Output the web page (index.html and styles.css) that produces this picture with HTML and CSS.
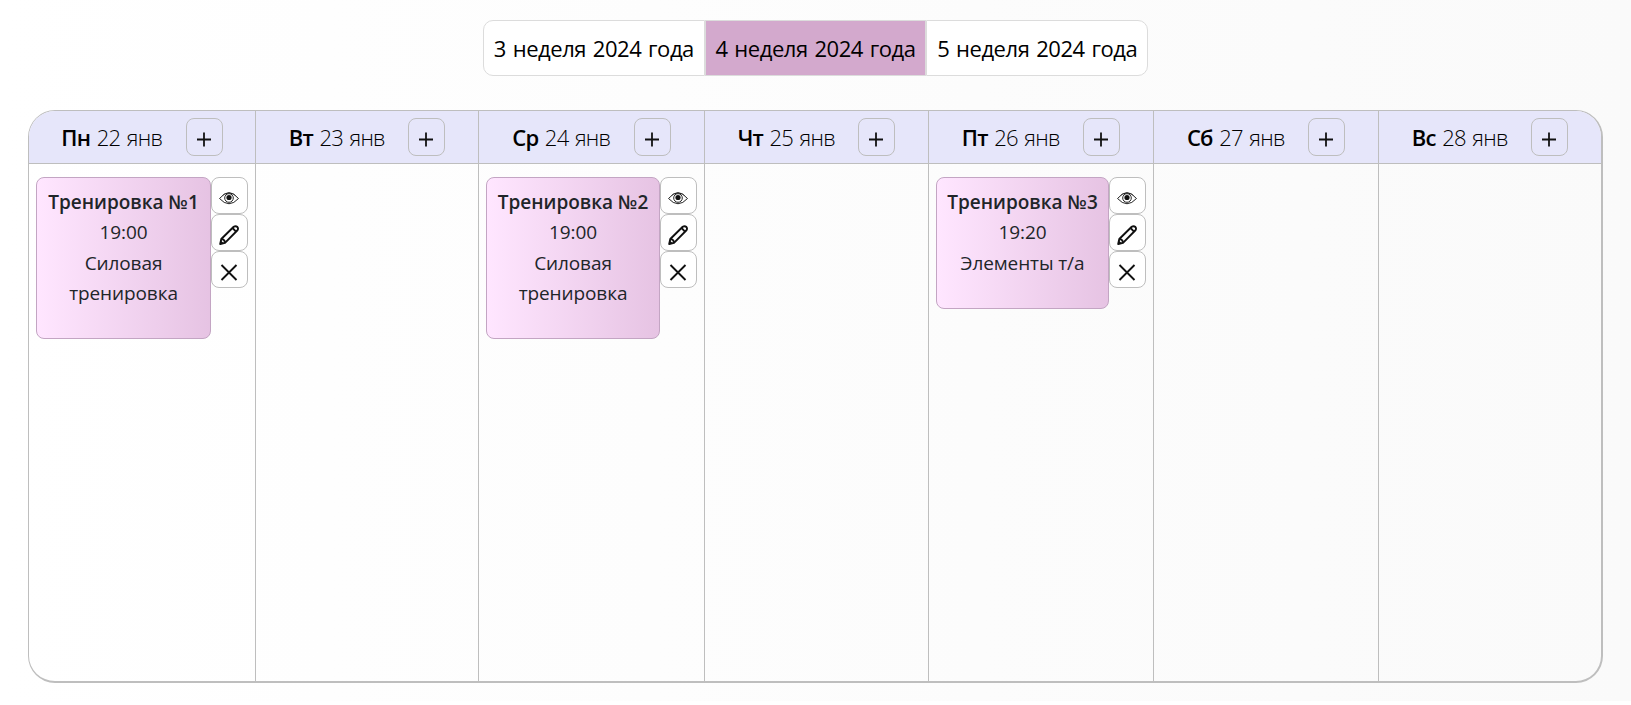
FILE: index.html
```
<!DOCTYPE html>
<html lang="ru">
<head>
<meta charset="utf-8">
<title>Расписание тренировок</title>
<link rel="stylesheet" href="styles.css">
</head>
<body>
<svg width="0" height="0" class="defs">
  <symbol id="plus" viewBox="0 0 20 20"><path d="M10 3.500v14M3 10.500h14" fill="none" stroke="#111" stroke-width="1.8"/></symbol>
  <symbol id="eye" viewBox="0 0 20 20"><g fill="none" stroke="#222" stroke-width="1"><path d="M.5 10.500Q10-1 19.500 10.500Q10 21 .5 10.500Z"/><path d="M3.500 7.500Q10 2 16.500 7.500" stroke-width=".7"/><circle cx="10" cy="10" r="4.300"/></g><circle cx="10" cy="9.500" r="2.600" fill="#111"/></symbol>
  <symbol id="pencil" viewBox="0 0 20 20"><g fill="none" stroke="#111" stroke-width="1.900" stroke-linejoin="round"><path d="M1.200 19L2.300 14L14.700 1.800Q16.700 .4 18.400 2Q19.700 3.800 18.200 5.500L6 17.900Z"/><path d="M13.500 3L17 6.600M2.300 14Q5.800 14.300 6 17.900"/></g><path d="M.8 19.500L1.700 15.500L5 18.600Z" fill="#111"/></symbol>
  <symbol id="cross" viewBox="0 0 20 20"><path d="M2.500 3L17.500 18M17.500 3L2.500 18" fill="none" stroke="#111" stroke-width="1.900"/></symbol>
</svg>
<main class="page">
  <nav class="weeks">
    <a class="week">3 неделя 2024 года</a>
    <a class="week active">4 неделя 2024 года</a>
    <a class="week">5 неделя 2024 года</a>
  </nav>
  <section class="calendar">
    <div class="day">
      <header class="head"><span class="date"><b>Пн</b> 22 янв</span><button class="btn add"><svg><use href="#plus"/></svg></button></header>
      <div class="body">
        <article class="card"><b>Тренировка №1</b><span>19:00</span><span>Силовая</span><span>тренировка</span></article>
        <div class="tools"><button class="btn"><svg><use href="#eye"/></svg></button><button class="btn"><svg><use href="#pencil"/></svg></button><button class="btn"><svg><use href="#cross"/></svg></button></div>
      </div>
    </div>
    <div class="day">
      <header class="head"><span class="date"><b>Вт</b> 23 янв</span><button class="btn add"><svg><use href="#plus"/></svg></button></header>
    </div>
    <div class="day">
      <header class="head"><span class="date"><b>Ср</b> 24 янв</span><button class="btn add"><svg><use href="#plus"/></svg></button></header>
      <div class="body">
        <article class="card"><b>Тренировка №2</b><span>19:00</span><span>Силовая</span><span>тренировка</span></article>
        <div class="tools"><button class="btn"><svg><use href="#eye"/></svg></button><button class="btn"><svg><use href="#pencil"/></svg></button><button class="btn"><svg><use href="#cross"/></svg></button></div>
      </div>
    </div>
    <div class="day">
      <header class="head"><span class="date"><b>Чт</b> 25 янв</span><button class="btn add"><svg><use href="#plus"/></svg></button></header>
    </div>
    <div class="day">
      <header class="head"><span class="date"><b>Пт</b> 26 янв</span><button class="btn add"><svg><use href="#plus"/></svg></button></header>
      <div class="body">
        <article class="card"><b>Тренировка №3</b><span>19:20</span><span>Элементы т/а</span></article>
        <div class="tools"><button class="btn"><svg><use href="#eye"/></svg></button><button class="btn"><svg><use href="#pencil"/></svg></button><button class="btn"><svg><use href="#cross"/></svg></button></div>
      </div>
    </div>
    <div class="day">
      <header class="head"><span class="date"><b>Сб</b> 27 янв</span><button class="btn add"><svg><use href="#plus"/></svg></button></header>
    </div>
    <div class="day">
      <header class="head"><span class="date"><b>Вс</b> 28 янв</span><button class="btn add"><svg><use href="#plus"/></svg></button></header>
    </div>
  </section>
</main>
</body>
</html>
```
FILE: styles.css
```
* { box-sizing: border-box; }
body { margin: 0; background: #fff; font-family: "Open Sans", "Noto Sans", sans-serif; color: #000; }
.defs { display: block; }
.page { height: 701px; padding: 20px 28px 0; background: linear-gradient(90deg, #fff, #fafafa); }
.weeks { display: flex; width: 665px; height: 56px; margin: 0 auto 34px 455px; }
.week { flex: 1; display: flex; align-items: center; justify-content: center; border: 1px solid #dcdcdc; background: #fff; font-size: 22px; letter-spacing: -0.45px; word-spacing: 1.5px; white-space: nowrap; }
.week:first-child { border-radius: 10px 0 0 10px; }
.week:last-child { border-radius: 0 10px 10px 0; }
.week.active { background: #d3a9cd; }
.calendar { display: grid; grid-template-columns: 226px 223px 226px 224px 225px 225px 223px; width: 1575px; height: 573px; border: solid #bebebe; border-width: 1px 2px 2px 1px; border-radius: 27px; overflow: hidden; }
.day { border-left: 1px solid #bebebe; }
.day:first-child { border-left: 0; }
.head { display: flex; align-items: center; justify-content: center; gap: 23.5px; height: 53px; padding-bottom: 1px; background: #e6e6fa; border-bottom: 1px solid #bebebe; }
.date { font-size: 22px; font-weight: 300; letter-spacing: -0.75px; word-spacing: 1.5px; white-space: nowrap; }
.date b { font-weight: 600; }
.btn { display: flex; align-items: center; justify-content: center; width: 37px; height: 37px; flex: none; margin: 0; padding: 4px 1px 0 0; border: 1px solid #bebebe; border-radius: 8px; background: transparent; }
.btn svg { width: 20px; height: 20px; }
.add { height: 38px; }
.body { display: flex; align-items: flex-start; padding: 13px 7px 0; }
.card { flex: 1; display: flex; flex-direction: column; align-items: center; padding: 8.5px 0 29.5px; border: 1px solid #c3a5c3; border-radius: 8px; background: linear-gradient(90deg, #ffe6ff, #e6c3e3); color: #212529; font-size: 19px; letter-spacing: -0.1px; line-height: 30.5px; white-space: nowrap; }
.card b { font-weight: 600; letter-spacing: 0; }
.tools .btn { background: #fff; }
```
